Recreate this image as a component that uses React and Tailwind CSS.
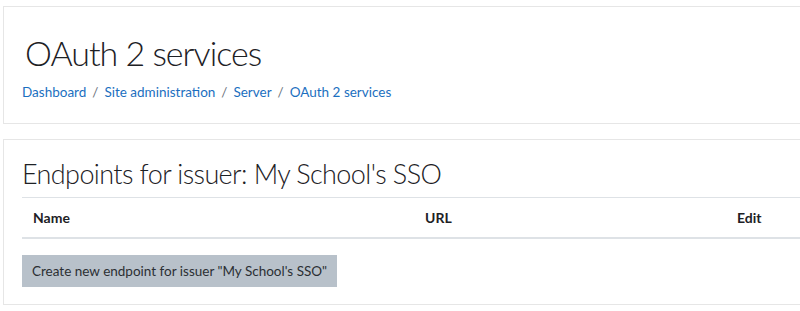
export default function App() {
  const crumbs = ["Dashboard", "Site administration", "Server", "OAuth 2 services"];
  return (
    <div className="w-[800px] h-[311px] overflow-hidden bg-white" style={{ fontFamily: 'Lato, "Open Sans", sans-serif' }}>
      <div className="ml-[3px] mt-[6px] w-[830px] h-[118px] border border-[#e6e6e6] pl-[18px] pt-[24px]">
        <h1 className="text-[34px] leading-[44px] font-light tracking-[-1px] text-[#1d2125] ml-[3px]">OAuth 2 services</h1>
        <nav className="mt-[7px] flex items-center text-[13.5px] leading-[20px]">
          {crumbs.map((c, i) => (
            <span key={c} className="flex items-center">
              {i > 0 && <span className="mx-[6px] text-[#6a737b]">/</span>}
              <a className="text-[#1b6fc0]">{c}</a>
            </span>
          ))}
        </nav>
      </div>
      <div className="ml-[3px] mt-[15px] w-[830px] h-[166px] border border-[#e6e6e6] pl-[18px] pt-[16px]">
        <h2 className="text-[27px] leading-[36px] font-light tracking-[-0.6px] text-[#1d2125]">Endpoints for issuer: My School's SSO</h2>
        <div className="mt-[5px] border-t border-[#dee2e6] border-b-2 flex h-[42px] items-center text-[14px] font-bold text-[#1d2125]">
          <div className="w-[403px] pl-[11px]">Name</div>
          <div className="w-[312px]">URL</div>
          <div>Edit</div>
        </div>
        <button className="mt-[16px] h-[32px] px-[10px] bg-[#b8c1ca] text-[13.5px] text-[#2b2f33]">
          Create new endpoint for issuer "My School's SSO"
        </button>
      </div>
    </div>
  );
}
